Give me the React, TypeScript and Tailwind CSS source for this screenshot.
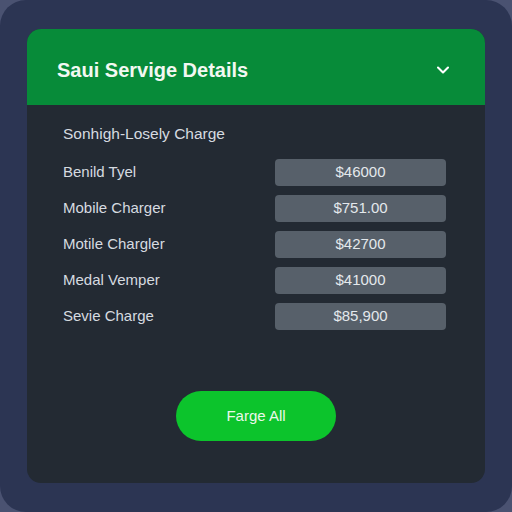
import { ChevronDown } from "lucide-react";

const rows = [
  { label: "Benild Tyel", value: "$46000" },
  { label: "Mobile Charger", value: "$751.00" },
  { label: "Motile Chargler", value: "$42700" },
  { label: "Medal Vemper", value: "$41000" },
  { label: "Sevie Charge", value: "$85,900" },
];

export default function App() {
  return (
    <div className="h-[512px] w-[512px] bg-[#4a5271] font-['Liberation_Sans',Arial,sans-serif]">
      <div className="h-full w-full rounded-[26px] bg-[#2c3553] px-[27px] pt-[29px] pb-[29px]">
        <div className="flex h-full flex-col overflow-hidden rounded-[14px] bg-[#232a33]">
          <div className="flex h-[76px] items-center justify-between bg-[#078b39] pl-[30px] pr-[32px] pt-[6px]">
            <h1 className="text-[20px] font-bold text-[#f2f8f2]">Saui Servige Details</h1>
            <ChevronDown className="h-5 w-5 text-white" strokeWidth={2.5} />
          </div>
          <div className="flex flex-col pl-[36px] pr-[39px] pt-[19px]">
            <p className="text-[15.5px] leading-[20px] text-[#d6dbe0]">Sonhigh-Losely Charge</p>
            <div className="mt-[15px] flex flex-col gap-[9px]">
              {rows.map((r) => (
                <div key={r.label} className="flex items-center justify-between">
                  <span className="text-[15px] text-[#d6dbe0]">{r.label}</span>
                  <span className="flex h-[27px] w-[171px] items-center justify-center rounded-[4px] bg-[#57606a] text-[15px] text-[#e4e8ec]">
                    {r.value}
                  </span>
                </div>
              ))}
            </div>
          </div>
          <div className="mt-[61px] flex justify-center">
            <button className="h-[50px] w-[160px] rounded-full bg-[#0cc42c] text-[15px] text-[#eaf8ea]">
              Farge All
            </button>
          </div>
        </div>
      </div>
    </div>
  );
}
